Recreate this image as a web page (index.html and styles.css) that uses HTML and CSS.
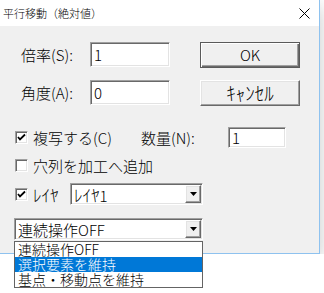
FILE: index.html
```html
<!DOCTYPE html>
<html lang="ja">
<head>
    <meta charset="utf-8">
    <title>平行移動（絶対値）</title>
    <link rel="stylesheet" href="styles.css">
</head>
<body>
    <div class="window">
        <div class="titlebar">
            <span class="title">平行移動（絶対値）</span>
            <svg class="close" width="11" height="11" viewBox="0 0 11 11">
                <path d="M0.5 0.5 L10.5 10.5 M10.5 0.5 L0.5 10.5" stroke="#000" stroke-width="1" fill="none"/>
            </svg>
        </div>
        <div class="content">
            <div class="row row-field">
                <span class="lbl lbl-field">倍率(S):</span>
                <div class="edit edit-main">1</div>
                <button class="btn btn-default">OK</button>
            </div>
            <div class="row row-field row-2">
                <span class="lbl lbl-field">角度(A):</span>
                <div class="edit edit-main">0</div>
                <button class="btn"><span class="kana kana-btn">ｷｬﾝｾﾙ</span></button>
            </div>
            <div class="row row-copy">
                <span class="check-item check-copy">
                    <span class="checkbox"><svg width="9" height="9" viewBox="0 0 9 9"><path d="M1 4 L3 6.5 L8 1.5" stroke="#000" stroke-width="1.8" fill="none"/></svg></span>
                    <span class="lbl">複写する(C)</span>
                </span>
                <span class="lbl lbl-count">数量(N):</span>
                <div class="edit edit-count">1</div>
            </div>
            <div class="row row-hole">
                <span class="check-item">
                    <span class="checkbox"></span>
                    <span class="lbl">穴列を加工へ追加</span>
                </span>
            </div>
            <div class="row row-layer">
                <span class="check-item check-layer">
                    <span class="checkbox"><svg width="9" height="9" viewBox="0 0 9 9"><path d="M1 4 L3 6.5 L8 1.5" stroke="#000" stroke-width="1.8" fill="none"/></svg></span>
                    <span class="lbl kana">ﾚｲﾔ</span>
                </span>
                <div class="combo combo-layer">
                    <span class="combo-text"><span class="kana">ﾚｲﾔ</span>1</span>
                    <span class="drop-btn"><svg width="7" height="4" viewBox="0 0 7 4"><polygon points="0,0 7,0 3.5,4" fill="#000"/></svg></span>
                </div>
            </div>
            <div class="row row-mode">
                <div class="combo combo-mode">
                    <span class="combo-text">連続操作OFF</span>
                    <span class="drop-btn"><svg width="7" height="4" viewBox="0 0 7 4"><polygon points="0,0 7,0 3.5,4" fill="#000"/></svg></span>
                </div>
            </div>
        </div>
    </div>
    <ul class="droplist">
        <li>連続操作OFF</li>
        <li class="selected">選択要素を維持</li>
        <li>基点・移動点を維持</li>
    </ul>
</body>
</html>
```

FILE: styles.css
```css
body {
    margin: 0;
    background-color: #fff;
    font-family: "Noto Sans CJK JP", sans-serif;
    font-size: 15px;
    font-weight: 300;
    color: #000;
}
.window {
    width: 319px;
    height: 253px;
    background-color: #f0f0f0;
    border-right: 1px solid #8ec2ef;
    border-bottom: 1px solid #8ec2ef;
    box-shadow: 0 6px 18px rgba(0, 0, 0, 0.22);
}
.titlebar {
    height: 26px;
    background-color: #fff;
    display: flex;
    align-items: center;
    justify-content: space-between;
    padding: 0 9px 0 3px;
}
.title {
    font-size: 11px;
    line-height: 1;
}
.close {
    display: block;
}
.content {
    padding-top: 16px;
}
.row {
    display: flex;
    align-items: center;
}
.lbl {
    line-height: 1;
    white-space: nowrap;
}
.kana {
    font-size: 17px;
    line-height: 1;
}
.kana-btn {
    font-size: 19px;
}
.row-field {
    height: 25px;
    padding-left: 21px;
}
.row-2 {
    margin-top: 13px;
}
.lbl-field {
    width: 69px;
}
.edit {
    box-sizing: border-box;
    background-color: #fff;
    border: 1px solid;
    border-color: #a0a0a0 #fff #fff #a0a0a0;
    box-shadow: inset 1px 1px #696969, inset -1px -1px #e3e3e3;
    padding-left: 3px;
    display: flex;
    align-items: center;
    line-height: 1;
}
.edit-main {
    width: 80px;
    height: 25px;
}
.btn {
    box-sizing: border-box;
    margin-left: 30px;
    width: 100px;
    height: 26px;
    font-family: inherit;
    font-size: 15px;
    font-weight: 300;
    line-height: 1;
    color: #000;
    background-color: #f0f0f0;
    border: 1px solid;
    border-color: #fff #696969 #696969 #fff;
    box-shadow: inset -1px -1px #a0a0a0, inset 1px 1px #e3e3e3;
    padding: 0;
}
.btn-default {
    border-color: #5a5a5a;
    box-shadow: inset 1px 1px #fff, inset -1px -1px #696969, inset -2px -2px #a0a0a0;
}
.check-item {
    display: flex;
    align-items: center;
    gap: 5px;
}
.checkbox {
    box-sizing: border-box;
    width: 13px;
    height: 13px;
    background-color: #fff;
    border: 1px solid;
    border-color: #a0a0a0 #fff #fff #a0a0a0;
    box-shadow: inset 1px 1px #696969, inset -1px -1px #e3e3e3;
    display: flex;
    align-items: center;
    justify-content: center;
}
.checkbox svg {
    display: block;
}
.row-copy {
    margin-top: 22px;
    height: 21px;
    padding-left: 15px;
}
.check-copy {
    width: 126px;
}
.lbl-count {
    width: 87px;
}
.edit-count {
    width: 58px;
    height: 21px;
}
.row-hole {
    margin-top: 10px;
    height: 14px;
    padding-left: 15px;
}
.row-layer {
    margin-top: 11px;
    height: 22px;
    padding-left: 15px;
}
.check-layer {
    width: 55px;
}
.combo {
    box-sizing: border-box;
    height: 22px;
    background-color: #fff;
    border: 1px solid;
    border-color: #a0a0a0 #fff #fff #a0a0a0;
    box-shadow: inset 1px 1px #696969, inset -1px -1px #e3e3e3;
    padding: 1px;
    display: flex;
    justify-content: space-between;
}
.combo-text {
    line-height: 1;
    padding-left: 2px;
    align-self: center;
    white-space: nowrap;
}
.combo-layer {
    width: 133px;
}
.drop-btn {
    box-sizing: border-box;
    width: 16px;
    background-color: #f0f0f0;
    border: 1px solid;
    border-color: #fff #696969 #696969 #fff;
    box-shadow: inset -1px -1px #a0a0a0, inset 1px 1px #e3e3e3;
    display: flex;
    align-items: center;
    justify-content: center;
}
.drop-btn svg {
    display: block;
}
.row-mode {
    margin-top: 13px;
    height: 22px;
    padding-left: 14px;
}
.combo-mode {
    width: 189px;
}
.droplist {
    position: absolute;
    left: 14px;
    top: 241px;
    width: 189px;
    box-sizing: border-box;
    margin: 0;
    padding: 0;
    list-style: none;
    background-color: #fff;
    border: 1px solid #646464;
}
.droplist li {
    height: 15px;
    line-height: 15px;
    padding-left: 3px;
    font-size: 14px;
    white-space: nowrap;
}
.droplist .selected {
    background-color: #0078d7;
    color: #fff;
}
```
